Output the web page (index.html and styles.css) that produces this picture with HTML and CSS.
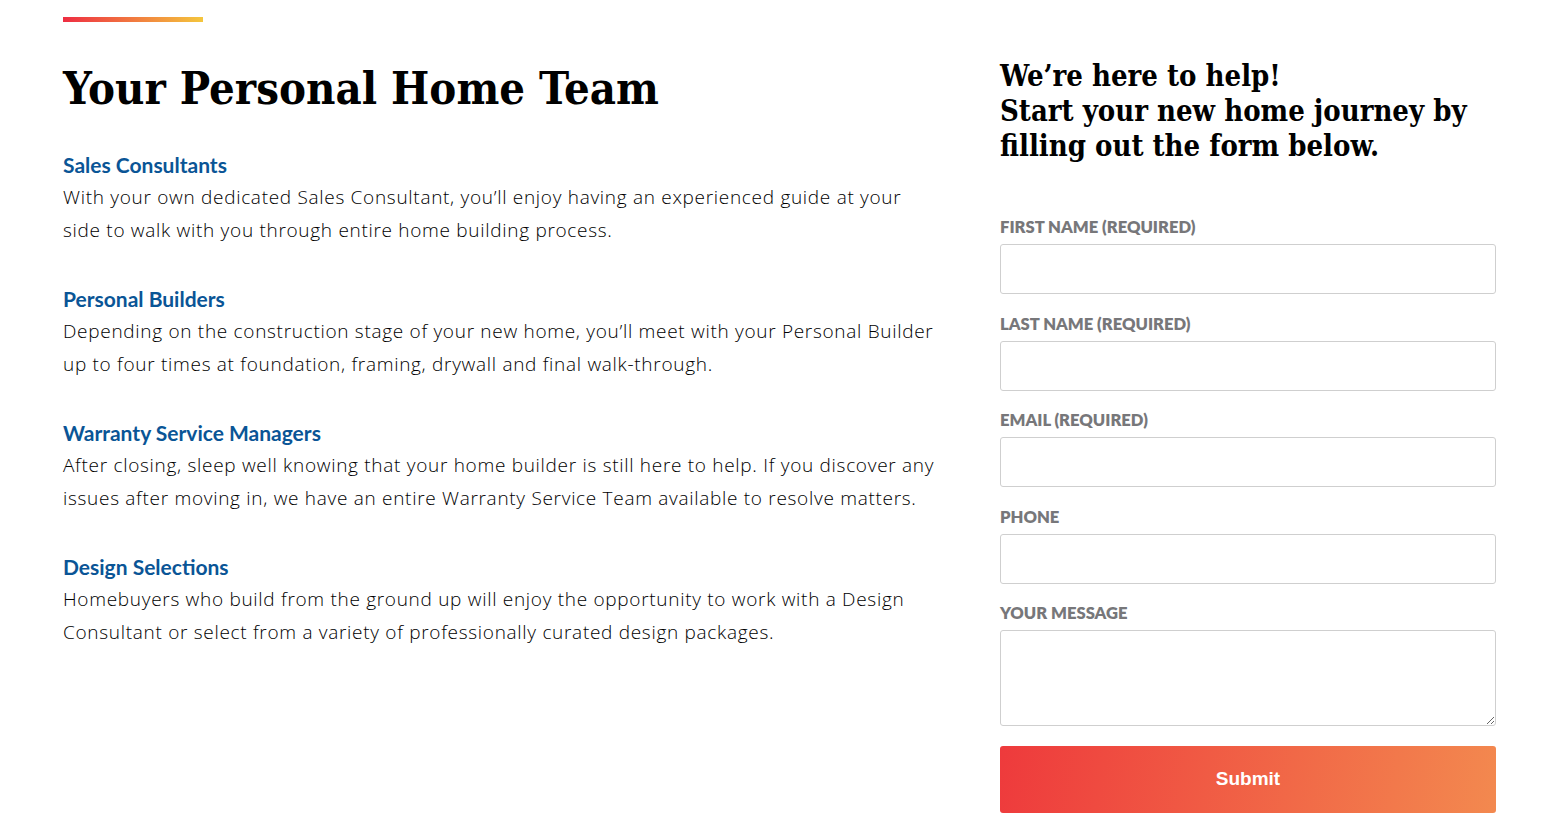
FILE: index.html
```html
<!DOCTYPE html>
<html lang="en">
<head>
    <meta charset="UTF-8">
    <meta name="viewport" content="width=device-width, initial-scale=1.0">
    <title>Your Personal Home Team</title>
    <link rel="stylesheet" href="styles.css">
</head>
<body>
    <div class="page">
        <section class="team">
            <div class="accent_bar"></div>
            <h1 class="team_title">Your Personal Home Team</h1>
            <div class="team_item">
                <h3>Sales Consultants</h3>
                <p>With your own dedicated Sales Consultant, you’ll enjoy having an experienced guide at your side to walk with you through entire home building process.</p>
            </div>
            <div class="team_item">
                <h3>Personal Builders</h3>
                <p>Depending on the construction stage of your new home, you’ll meet with your Personal Builder up to four times at foundation, framing, drywall and final walk-through.</p>
            </div>
            <div class="team_item">
                <h3>Warranty Service Managers</h3>
                <p>After closing, sleep well knowing that your home builder is still here to help. If you discover any issues after moving in, we have an entire Warranty Service Team available to resolve matters.</p>
            </div>
            <div class="team_item">
                <h3>Design Selections</h3>
                <p>Homebuyers who build from the ground up will enjoy the opportunity to work with a Design Consultant or select from a variety of professionally curated design packages.</p>
            </div>
        </section>

        <aside class="contact">
            <h2 class="contact_title">We’re here to help!<br>Start your new home journey by filling out the form below.</h2>
            <form class="contact_form" action="#">
                <label class="field">
                    <span>First Name (Required)</span>
                    <input type="text" name="first_name">
                </label>
                <label class="field">
                    <span>Last Name (Required)</span>
                    <input type="text" name="last_name">
                </label>
                <label class="field">
                    <span>Email (Required)</span>
                    <input type="email" name="email">
                </label>
                <label class="field">
                    <span>Phone</span>
                    <input type="tel" name="phone">
                </label>
                <label class="field">
                    <span>Your Message</span>
                    <textarea name="message"></textarea>
                </label>
                <input type="submit" class="submit_btn" value="Submit">
            </form>
        </aside>
    </div>
</body>
</html>
```

FILE: styles.css
```css
*{
    box-sizing: border-box;
}
body{
    margin: 0;
    background: #fff;
    color: #1d1d1f;
    font-family: Lato, "Open Sans", sans-serif;
}
.page{
    display: flex;
    justify-content: space-between;
    padding: 17px 63px 0 63px;
}

/* left column */
.team{
    width: 875px;
}
.accent_bar{
    width: 140px;
    height: 5px;
    background: linear-gradient(90deg, #ee2d42, #f4c63d);
}
.team_title{
    margin: 37px 0 30px;
    font-family: "DejaVu Serif Condensed", "DejaVu Serif", serif;
    font-size: 45px;
    line-height: 60px;
    font-weight: bold;
    color: #000;
}
.team_item{
    margin-bottom: 37px;
}
.team_item h3{
    margin: 0;
    font-size: 21px;
    line-height: 32px;
    font-weight: bold;
    color: #0a5596;
}
.team_item p{
    margin: 0;
    font-family: "Open Sans", Lato, sans-serif;
    font-size: 19px;
    line-height: 32.5px;
    letter-spacing: 0.7px;
    font-weight: 300;
    color: #000;
}

/* right column */
.contact{
    width: 496px;
    padding-top: 42px;
}
.contact_title{
    margin: 0 0 53px;
    font-family: "DejaVu Serif Condensed", "DejaVu Serif", serif;
    font-size: 29px;
    line-height: 35px;
    font-weight: bold;
    color: #000;
}
.contact_form{
    display: flex;
    flex-direction: column;
}
.field{
    display: flex;
    flex-direction: column;
    margin-bottom: 19.5px;
}
.field span{
    font-size: 16.6px;
    line-height: 20px;
    font-weight: 800;
    text-transform: uppercase;
    color: #77777a;
    margin-bottom: 7px;
}
.field input,
.field textarea{
    height: 50px;
    border: 1px solid #cfcfcf;
    border-radius: 3px;
    font: inherit;
    padding: 0 12px;
}
.field textarea{
    height: 96px;
    resize: vertical;
}
.submit_btn{
    height: 67px;
    border: 0;
    border-radius: 3px;
    background: linear-gradient(100deg, #ee3a3c, #f3894f);
    color: #fff;
    font-family: "Liberation Sans", Arial, sans-serif;
    font-size: 19px;
    font-weight: bold;
    cursor: pointer;
}
```
